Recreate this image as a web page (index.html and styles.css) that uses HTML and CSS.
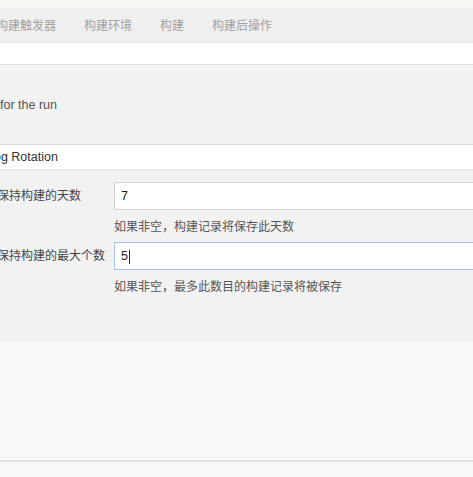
FILE: index.html
```html
<!DOCTYPE html>
<html lang="zh">
<head>
<meta charset="utf-8">
<title>构建配置</title>
<link rel="stylesheet" href="styles.css">
</head>
<body>
<div class="page">
  <div class="top-strip"></div>
  <nav class="tabs">
    <span class="tab first">构建触发器</span>
    <span class="tab">构建环境</span>
    <span class="tab">构建</span>
    <span class="tab">构建后操作</span>
  </nav>
  <div class="blank"></div>
  <section class="form">
    <p class="desc">for the run</p>
    <div class="band"><span class="band-text">Log Rotation</span></div>
    <div class="row">
      <label class="label">保持构建的天数</label>
      <div class="field">
        <div class="input">7</div>
        <div class="help">如果非空，构建记录将保存此天数</div>
      </div>
    </div>
    <div class="row">
      <label class="label">保持构建的最大个数</label>
      <div class="field">
        <div class="input focus">5<span class="caret"></span></div>
        <div class="help">如果非空，最多此数目的构建记录将被保存</div>
      </div>
    </div>
  </section>
  <div class="light-band"></div>
  <div class="lower"></div>
  <div class="rule"></div>
  <div class="bottom"></div>
</div>
</body>
</html>
```
FILE: styles.css
```css
html, body {
  margin: 0;
  padding: 0;
  overflow: hidden;
}
body {
  font-family: "Liberation Sans", "Noto Sans CJK SC", sans-serif;
  font-size: 12px;
  background: #f9f9f9;
  width: 473px;
  height: 477px;
}
.page {
  display: flex;
  flex-direction: column;
  width: 473px;
}
.top-strip {
  height: 8px;
  background: #f7f8f3;
}
.tabs {
  display: flex;
  height: 31px;
  padding-top: 3px;
  background: #efefef;
  line-height: 31px;
  color: #a0a0a0;
  margin-left: -4px;
}
.tab {
  padding: 0 14px;
}
.tab.first {
  padding-left: 0;
}
.blank {
  height: 21px;
  background: #fff;
  border-top: 1px solid #e4e4e4;
  border-bottom: 1px solid #dedede;
}
.form {
  background: #f2f2f2;
  padding-bottom: 40px;
  border-top: 1px solid #f7f7f7;
}
.desc {
  margin: 30px 0 0;
  line-height: 18px;
  color: #555;
  font-size: 12.5px;
}
.band {
  margin-top: 30px;
  height: 24px;
  background: #fff;
  border-top: 1px solid #dcdcdc;
  border-bottom: 1px solid #e0e0e0;
  line-height: 25px;
  overflow: hidden;
}
.band-text {
  display: block;
  margin-left: -13px;
  color: #333;
  font-size: 12.5px;
}
.row {
  display: flex;
  margin: 12px -10px 0 -3px;
}
.row + .row {
  margin-top: 6px;
}
.label {
  width: 117px;
  flex: none;
  height: 28px;
  line-height: 28px;
  color: #444;
}
.field {
  flex: 1;
  display: flex;
  flex-direction: column;
}
.input {
  height: 26px;
  line-height: 26px;
  background: #fff;
  border: 1px solid #d2d2d2;
  padding-left: 6px;
  color: #222;
  font-size: 12.5px;
}
.input.focus {
  border-color: #a9c2e6;
}
.caret {
  display: inline-block;
  width: 1px;
  height: 14px;
  background: #222;
  vertical-align: middle;
  margin-left: 1px;
}
.help {
  margin-top: 8px;
  line-height: 18px;
  color: #555;
}
.light-band {
  height: 7px;
  background: #f5f5f5;
}
.lower {
  height: 114px;
  background: #f9f9f9;
}
.rule {
  height: 2px;
  border-top: 1px solid #efefef;
  border-bottom: 2px solid #e2e2e2;
  background: #fbfbfb;
}
.bottom {
  height: 20px;
  background: #f9f9f9;
}
```
